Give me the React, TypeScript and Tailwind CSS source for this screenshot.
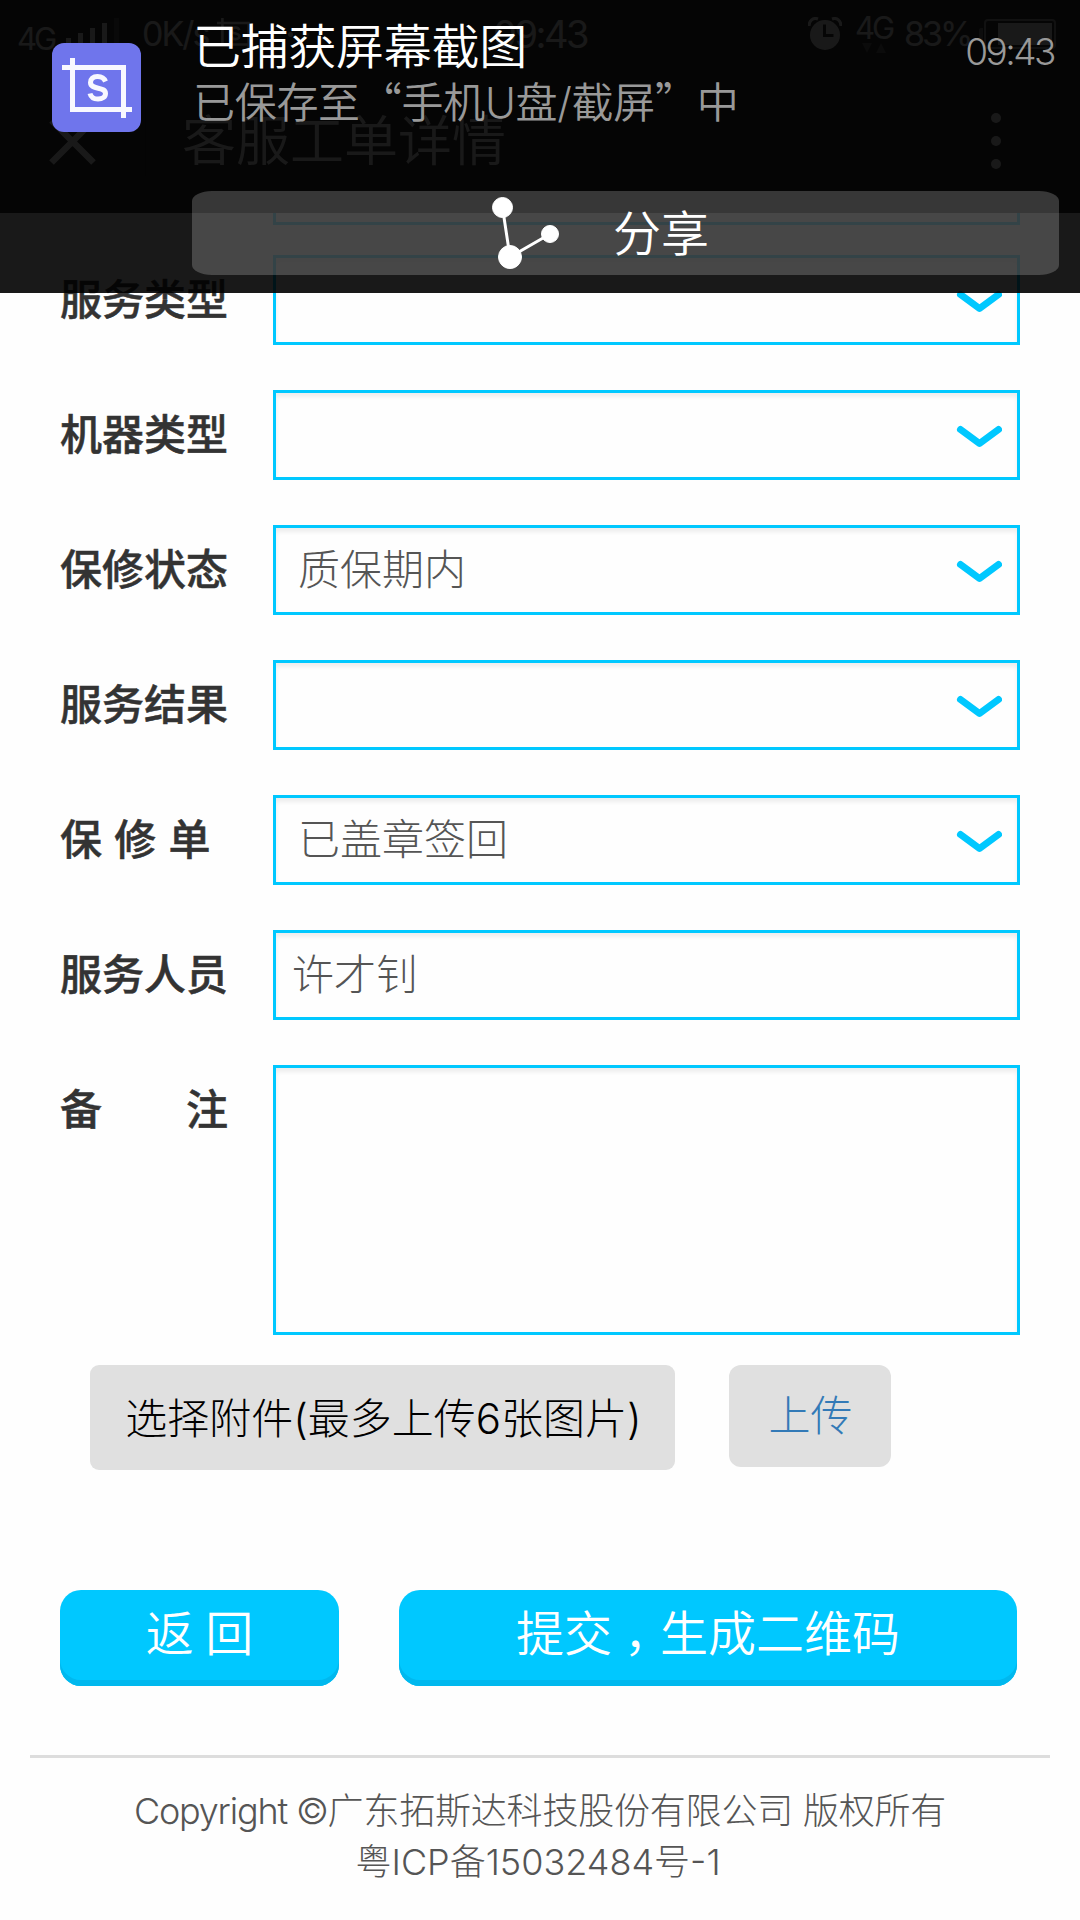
import React from 'react'

type Field = {
  label: string
  value?: string
  kind: 'select' | 'input' | 'textarea'
}

const FIELDS: Field[] = [
  { label: '服务类型', kind: 'select' },
  { label: '机器类型', kind: 'select' },
  { label: '保修状态', kind: 'select', value: '质保期内' },
  { label: '服务结果', kind: 'select' },
  { label: '保 修 单', kind: 'select', value: '已盖章签回' },
  { label: '服务人员', kind: 'input', value: '许才钊' },
  { label: '备\u3000\u3000注', kind: 'textarea' },
]

function Chevron() {
  return (
    <svg className="w-[46px] h-[26px]" viewBox="0 0 46 26" fill="none">
      <path
        d="M4.500 7.500 L23.500 21.500 L42.500 7.500"
        stroke="#00c8ff"
        strokeWidth="7"
        strokeLinecap="round"
        strokeLinejoin="round"
      />
    </svg>
  )
}

function CropIcon({ className }: { className: string }) {
  return (
    <svg className={className} viewBox="0 0 70 60" fill="none" stroke="currentColor" strokeWidth="5">
      <path d="M0 9.500 H61.500 V60" />
      <path d="M10.500 0 V51.500 H70" />
      <path d="M43.500 23.500 C42 19.500 39 18.500 35.500 18.500 C31 18.500 28.500 21 28.500 24.500 C28.500 32.500 43.500 28 43.500 35.500 C43.500 39 40.500 41 36 41 C32 41 29 39.500 28 35.500" />
    </svg>
  )
}

function StatusBar() {
  return (
    <div className="relative h-[69px] text-white font-['Inter','Roboto',sans-serif]">
      <span className="absolute left-[17px] top-[20px] text-[31px] leading-[38px] tracking-[-3px]">4G</span>
      <div className="absolute left-[66px] top-[18px] flex h-[32px] items-end gap-[7px]">
        <i className="w-[5px] h-[12px] bg-white" />
        <i className="w-[5px] h-[17px] bg-white" />
        <i className="w-[5px] h-[22px] bg-white" />
        <i className="w-[5px] h-[27px] bg-white" />
        <i className="w-[5px] h-[32px] bg-white/20" />
      </div>
      <span className="absolute left-[142px] top-[14px] text-[34px] leading-[40px] tracking-[-2px]">0K/s</span>
      <CropIcon className="absolute left-[217px] top-[18px] w-[36px] h-[31px]" />
      <i className="absolute left-[288px] top-[32px] size-[5px] rounded-full bg-white" />
      <i className="absolute left-[304px] top-[32px] size-[5px] rounded-full bg-white/50" />
      <span className="absolute left-[493px] top-[13px] text-[38px] leading-[42px] tracking-[-2.500px]">09:43</span>
      <svg className="absolute left-[808px] top-[17px] w-[34px] h-[34px]" viewBox="0 0 34 34" fill="none">
        <circle cx="17" cy="18" r="15" fill="white" />
        <path d="M1 9 C1 4 5 0 10 2 M24 2 C29 0 33 4 33 9" stroke="white" strokeWidth="3" />
        <path d="M16.500 7.500 V18.500 H25.500" stroke="#323232" strokeWidth="3" />
      </svg>
      <span className="absolute left-[855px] top-[9px] text-[31px] leading-[38px] tracking-[-3px]">4G</span>
      <svg className="absolute left-[862px] top-[43px] w-[24px] h-[10px]" viewBox="0 0 24 10" fill="white" opacity="0.3">
        <path d="M0 0 H10 L5 10 Z M14 10 H24 L19 0 Z" />
      </svg>
      <span className="absolute left-[904px] top-[14px] text-[34px] leading-[40px] tracking-[-3px]">83%</span>
      <div className="absolute left-[979px] top-[28px] w-[4px] h-[12px] bg-white/40 rounded-l-[2px]" />
      <div className="absolute left-[984px] top-[19px] w-[72px] h-[30px] rounded-[4px] border-2 border-white/60 py-[2px] pl-[12px] pr-[2px]">
        <div className="h-full bg-white" />
      </div>
    </div>
  )
}

function NavBar() {
  return (
    <div className="flex h-[144px] items-center text-white">
      <svg className="ml-[49px] w-[47px] h-[47px]" viewBox="0 0 47 47" stroke="white" strokeWidth="6.500">
        <path d="M2.500 2.500 L44.500 44.500 M44.500 2.500 L2.500 44.500" />
      </svg>
      <div className="ml-[49px] h-[70px] w-px bg-black/20" />
      <h1 className="ml-[36px] pt-[2px] text-[54px] leading-[70px] font-[350]">客服工单详情</h1>
      <div className="ml-auto mr-[79px] flex flex-col gap-[13px]">
        <i className="size-[10px] rounded-full bg-white" />
        <i className="size-[10px] rounded-full bg-white" />
        <i className="size-[10px] rounded-full bg-white" />
      </div>
    </div>
  )
}

function FormRow({ field }: { field: Field }) {
  const { label, value, kind } = field
  return (
    <div className="flex">
      <div className="w-[213px] h-[90px] text-[42px] leading-[90px] font-medium text-[#333] [-webkit-text-stroke:0.5px_#333] [word-spacing:1px] whitespace-pre">
        {label}
      </div>
      <div
        className={`flex w-[747px] items-center border-[3px] border-[#00c8ff] shadow-[inset_0_4px_4px_rgba(0,0,0,0.07)] ${kind === 'textarea' ? 'h-[270px]' : 'h-[90px]'} ${kind === 'select' ? 'pl-[22px] pr-[15px]' : 'pl-[16px]'}`}
      >
        <span className="flex-1 text-[42px] leading-[60px] font-light text-[#555]">{value}</span>
        {kind === 'select' && <Chevron />}
      </div>
    </div>
  )
}

function ScreenshotNotice() {
  return (
    <div className="absolute left-0 top-0 w-[1080px] h-[292.500px] bg-black/90">
      <div className="flex h-[191px]">
        <div className="ml-[52px] mt-[43px] flex size-[89px] items-center justify-center rounded-[12px] bg-[#6f75ec] text-[#f8f8ff]">
          <CropIcon className="w-[70px] h-[60px]" />
        </div>
        <div className="ml-[52px] pt-[18px] flex-1">
          <div className="text-[48px] leading-[57px] font-[350] tracking-[-0.300px] text-white">已捕获屏幕截图</div>
          <div className="text-[42px] leading-[50px] font-[350] tracking-[-0.300px] text-[#999]">
            已保存至<span className="font-['Noto_Sans_CJK_SC']">“</span>手机U盘/截屏
            <span className="font-['Noto_Sans_CJK_SC']">”</span>中
          </div>
        </div>
        <div className="mr-[26px] pt-[30px] text-[37px] leading-[44px] font-light tracking-[-2.500px] text-[#999]">09:43</div>
      </div>
      <div className="ml-[192px] flex w-[867px] h-[84px] items-center rounded-[20px/10px] bg-white/20 text-white">
        <svg className="ml-[299px] w-[70px] h-[76px]" viewBox="0 0 70 76" fill="white" stroke="white">
          <path d="M11.500 12.500 L19 62 L59 39" fill="none" strokeWidth="3" />
          <circle cx="11.500" cy="12.500" r="10" />
          <circle cx="19" cy="62" r="11.500" />
          <circle cx="59" cy="39" r="8.500" />
        </svg>
        <span className="ml-[52px] pt-[2px] text-[48px] leading-[60px] font-[350]">分享</span>
      </div>
    </div>
  )
}

export default function App() {
  return (
    <div className="relative w-[1080px] h-[1920px] overflow-hidden bg-[#fefefe] font-['Inter','Noto_Sans_CJK_SC',sans-serif]">
      <header className="bg-[#323232]">
        <StatusBar />
        <NavBar />
      </header>

      <main className="pl-[60px]">
        <div className="ml-[213px] w-[747px] h-[12px] border-[3px] border-t-0 border-[#00c8ff]" />
        <div className="mt-[30px] flex flex-col gap-[45px]">
          {FIELDS.map((field) => (
            <FormRow key={field.label} field={field} />
          ))}
        </div>

        <div className="mt-[30px] ml-[30px] flex h-[105px] items-start gap-[54px]">
          <button className="w-[585px] h-[105px] pt-[2px] pl-[2px] rounded-[9px] bg-[#e0e0e0] text-[42px] font-light text-black">
            选择附件(最多上传6张图片)
          </button>
          <button className="w-[162px] h-[102px] pb-[2px] pl-px rounded-[12px] bg-[#e0e0e0] text-[42px] font-light text-[#337ab7]">
            上传
          </button>
        </div>

        <div className="mt-[120px] flex gap-[60px] text-[48px] font-[350] text-white">
          <button className="w-[279px] h-[96px] pb-[9px] rounded-[21px] bg-[#00c8ff] [word-spacing:-2px] shadow-[inset_0_-6px_0_#00b8ee]">
            返 回
          </button>
          <button className="w-[618px] h-[96px] pb-[9px] rounded-[21px] bg-[#00c8ff] shadow-[inset_0_-6px_0_#00b8ee]">
            提交<span className="inline-block translate-x-[12px]">，</span>生成二维码
          </button>
        </div>
      </main>

      <footer className="mx-[30px] mt-[69px] border-t-[3px] border-[#ddd] pt-[28px] text-center text-[36px] leading-[51px] font-light text-[#555]">
        <p className="tracking-[-0.200px]">
          <span className="tracking-[-1.200px]">Copyright ©</span>广东拓斯达科技股份有限公司 版权所有
        </p>
        <p className="pr-[4px]">粤ICP备15032484号-1</p>
      </footer>

      <ScreenshotNotice />
    </div>
  )
}
